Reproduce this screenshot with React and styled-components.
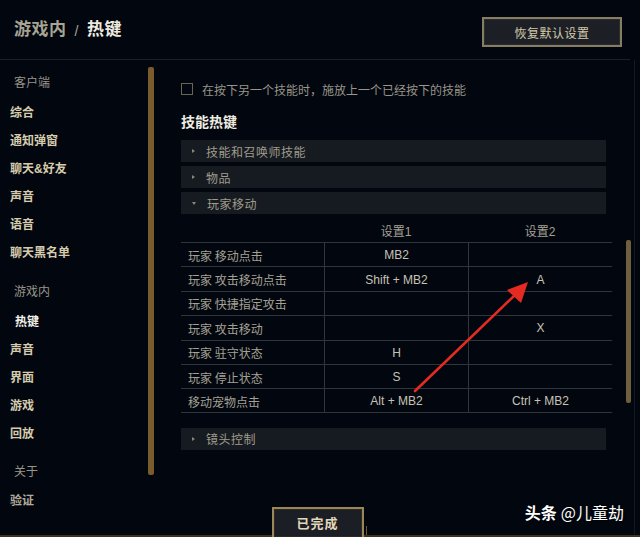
import React from 'react';
import styled, { createGlobalStyle } from 'styled-components';

const GlobalStyle = createGlobalStyle`
  html, body { margin: 0; padding: 0; background: #02070f; }
  body {
    font-family: "Liberation Sans", "Noto Sans CJK SC", sans-serif;
    -webkit-font-smoothing: antialiased;
  }
  * { box-sizing: border-box; }
`;

const Page = styled.div`
  position: relative;
  width: 640px;
  height: 537px;
  overflow: hidden;
  background: #02070f;
  display: flex;
  flex-direction: column;
`;

const Header = styled.header`
  height: 60px;
  flex: none;
  display: flex;
  align-items: flex-start;
  justify-content: space-between;
  padding: 0 0 0 14px;
  margin-right: 10px;
  border-bottom: 1px solid #1b2027;
`;

const Title = styled.h1`
  margin: 20px 0 0;
  font-size: 17px;
  line-height: 20px;
  font-weight: 700;
  color: #a8a393;
  letter-spacing: 0.5px;
  display: flex;
  gap: 8px;
`;

const Crumb = styled.span`
  color: ${p => (p.$current ? '#eeeae0' : '#a8a393')};
  font-weight: ${p => (p.$slash ? 400 : 700)};
  font-size: ${p => (p.$slash ? '14px' : '17px')};
  line-height: ${p => (p.$slash ? '22px' : '20px')};
`;

const ResetButton = styled.button`
  margin: 17px 8px 0 0;
  width: 140px;
  height: 30px;
  background: #1c2026;
  border: 2px solid #877d62;
  box-shadow: inset 0 0 0 1px #2a2b2a;
  color: #d4c9a8;
  font-family: "Noto Sans CJK SC", sans-serif;
  font-size: 12px;
  letter-spacing: 0.5px;
  cursor: pointer;
`;

const Body = styled.div`
  flex: 1;
  display: flex;
  min-height: 0;
  margin-right: 5px;
  border-right: 1px solid #141821;
`;

const Sidebar = styled.aside`
  width: 160px;
  flex: none;
  display: flex;
  padding-right: 6px;
`;

const Nav = styled.nav`
  flex: 1;
  padding-top: 8px;
  display: flex;
  flex-direction: column;
`;

const NavGroup = styled.div`
  display: flex;
  flex-direction: column;
  margin-top: ${p => p.$gap || 0}px;
`;

const GroupLabel = styled.div`
  height: 28px;
  line-height: 28px;
  padding-left: 14px;
  margin-bottom: ${p => p.$after ?? 3}px;
  font-family: "Noto Sans CJK SC", sans-serif;
  font-size: 12px;
  color: #99958a;
`;

const NavItem = styled.div`
  height: 28px;
  line-height: 28px;
  padding-left: ${p => (p.$active ? 15 : 10)}px;
  font-family: "Liberation Sans", "Noto Sans CJK SC", sans-serif;
  font-size: 12px;
  font-weight: 700;
  color: ${p => (p.$active ? '#f4f1ea' : p.$dim ? '#b1ab9a' : '#d6ccad')};
`;

const SideScroll = styled.div`
  width: 6px;
  height: 408px;
  margin-top: 7px;
  border-radius: 2px;
  background: #7a5b2c;
`;

const Content = styled.main`
  flex: 1;
  display: flex;
  padding-left: 21px;
`;

const Panel = styled.div`
  width: 431px;
  padding-top: 22px;
  display: flex;
  flex-direction: column;
`;

const CheckRow = styled.label`
  display: flex;
  align-items: center;
  gap: 9px;
  height: 14px;
  font-family: "Noto Sans CJK SC", sans-serif;
  font-size: 12px;
  color: #99958a;
`;

const Box = styled.span`
  width: 12px;
  height: 12px;
  border: 1.5px solid #6a6453;
  flex: none;
`;

const Heading = styled.h2`
  margin: 15px 0 0;
  height: 20px;
  line-height: 20px;
  font-family: "Noto Sans CJK SC", sans-serif;
  font-size: 14px;
  font-weight: 700;
  color: #f0ece2;
`;

const Sections = styled.div`
  margin-top: ${p => p.$top || 0}px;
  width: 425px;
  display: flex;
  flex-direction: column;
  gap: 4px;
`;

const Section = styled.div`
  height: 22px;
  display: flex;
  align-items: center;
  padding-left: 11px;
  gap: 11px;
  background: #161b21;
  font-family: "Noto Sans CJK SC", sans-serif;
  font-size: 12px;
  letter-spacing: 0.5px;
  color: #a09b8c;
`;

const Caret = styled.span`
  width: 0;
  height: 0;
  border-style: solid;
  ${p => (p.$open
    ? 'border-width: 3px 2.5px 0 2.5px; border-color: #8b8778 transparent transparent transparent;'
    : 'border-width: 2.5px 0 2.5px 3px; border-color: transparent transparent transparent #8b8778;')}
`;

const Table = styled.div`
  display: grid;
  grid-template-columns: 143px 144px 144px;
  grid-template-rows: 28px;
  grid-auto-rows: 24.4px;
  font-size: 12px;
  color: #c6c2b6;
`;

const HeadCell = styled.div`
  padding-top: 4px;
  display: flex;
  align-items: center;
  justify-content: center;
  color: #a5a194;
  font-family: "Liberation Sans", "Noto Sans CJK SC", sans-serif;
`;

const Cell = styled.div`
  display: flex;
  align-items: center;
  justify-content: ${p => (p.$label ? 'flex-start' : 'center')};
  padding-left: ${p => (p.$label ? 7 : 0)}px;
  padding-top: 1px;
  border-top: 1px solid #30343b;
  border-bottom: ${p => (p.$last ? '1px solid #30343b' : 'none')};
  border-left: ${p => (p.$label ? 'none' : '1px solid #30343b')};
  color: ${p => (p.$label ? '#a5a194' : '#c6c2b6')};
  font-family: ${p => (p.$label
    ? '"Noto Sans CJK SC", sans-serif'
    : '"Liberation Sans", "Noto Sans CJK SC", sans-serif')};
`;

const PanelScroll = styled.div`
  width: 5px;
  height: 163px;
  margin: 180px 0 0 14px;
  border-radius: 2px;
  background: #6f5f3e;
`;

const Footer = styled.footer`
  position: absolute;
  left: 0;
  right: 0;
  bottom: 0;
  height: 30px;
  display: flex;
  justify-content: center;
  border-bottom: 2px solid #3c321f;
`;

const Flare = styled.span`
  align-self: flex-end;
  width: 1px;
  height: 9px;
  background: #6b5a34;
  margin: 0 2px;
`;

const DoneButton = styled.button`
  width: 92px;
  height: 30px;
  margin-left: -5px;
  padding-bottom: 3px;
  background: #1b1f25;
  border: 2px solid #9b8658;
  border-bottom: none;
  box-shadow: inset 0 0 0 1px #2b2a24;
  color: #e2d7b8;
  font-family: "Noto Sans CJK SC", sans-serif;
  font-size: 13px;
  font-weight: 700;
  letter-spacing: 1px;
  cursor: pointer;
`;

const Watermark = styled.div`
  position: absolute;
  right: 16px;
  bottom: 13px;
  color: #ffffff;
  font-family: "Noto Sans CJK SC", sans-serif;
  font-size: 16px;
  text-shadow: 0 0 2px rgba(0, 0, 0, 0.6);
  b { font-weight: 700; margin-right: 4px; }
`;

const Overlay = styled.svg`
  position: absolute;
  inset: 0;
  pointer-events: none;
`;

const clientItems = ['综合', '通知弹窗', '聊天&好友', '声音', '语音', '聊天黑名单'];
const gameItems = ['热键', '声音', '界面', '游戏', '回放'];

const bindings = [
  ['玩家 移动点击', 'MB2', ''],
  ['玩家 攻击移动点击', 'Shift + MB2', 'A'],
  ['玩家 快捷指定攻击', '', ''],
  ['玩家 攻击移动', '', 'X'],
  ['玩家 驻守状态', 'H', ''],
  ['玩家 停止状态', 'S', ''],
  ['移动宠物点击', 'Alt + MB2', 'Ctrl + MB2'],
];

export default function App() {
  return (
    <Page>
      <GlobalStyle />
      <Header>
        <Title>
          <Crumb>游戏内</Crumb>
          <Crumb $slash>/</Crumb>
          <Crumb $current>热键</Crumb>
        </Title>
        <ResetButton>恢复默认设置</ResetButton>
      </Header>

      <Body>
        <Sidebar>
          <Nav>
            <NavGroup>
              <GroupLabel>客户端</GroupLabel>
              {clientItems.map(item => <NavItem key={item}>{item}</NavItem>)}
            </NavGroup>
            <NavGroup $gap={10}>
              <GroupLabel>游戏内</GroupLabel>
              {gameItems.map((item, i) => (
                <NavItem key={item} $active={i === 0}>{item}</NavItem>
              ))}
            </NavGroup>
            <NavGroup $gap={9}>
              <GroupLabel $after={2}>关于</GroupLabel>
              <NavItem $dim>验证</NavItem>
            </NavGroup>
          </Nav>
          <SideScroll />
        </Sidebar>

        <Content>
          <Panel>
            <CheckRow>
              <Box />
              在按下另一个技能时，施放上一个已经按下的技能
            </CheckRow>
            <Heading>技能热键</Heading>
            <Sections $top={9}>
              <Section><Caret />技能和召唤师技能</Section>
              <Section><Caret />物品</Section>
              <Section><Caret $open />玩家移动</Section>
            </Sections>
            <Table>
              <HeadCell />
              <HeadCell>设置1</HeadCell>
              <HeadCell>设置2</HeadCell>
              {bindings.map(([label, first, second], i) => {
                const last = i === bindings.length - 1;
                return (
                  <React.Fragment key={label}>
                    <Cell $label $last={last}>{label}</Cell>
                    <Cell $last={last}>{first}</Cell>
                    <Cell $last={last}>{second}</Cell>
                  </React.Fragment>
                );
              })}
            </Table>
            <Sections $top={15}>
              <Section><Caret />镜头控制</Section>
            </Sections>
          </Panel>
          <PanelScroll />
        </Content>
      </Body>

      <Footer>
        <Flare />
        <DoneButton>已完成</DoneButton>
        <Flare />
      </Footer>

      <Watermark><b>头条</b>@儿童劫</Watermark>

      <Overlay width="640" height="537" viewBox="0 0 640 537">
        <line x1="415" y1="391" x2="516" y2="294" stroke="#e52a22" strokeWidth="2.6" strokeLinecap="round" />
        <polygon points="528,282 521,303 507,290" fill="#e52a22" />
      </Overlay>
    </Page>
  );
}
